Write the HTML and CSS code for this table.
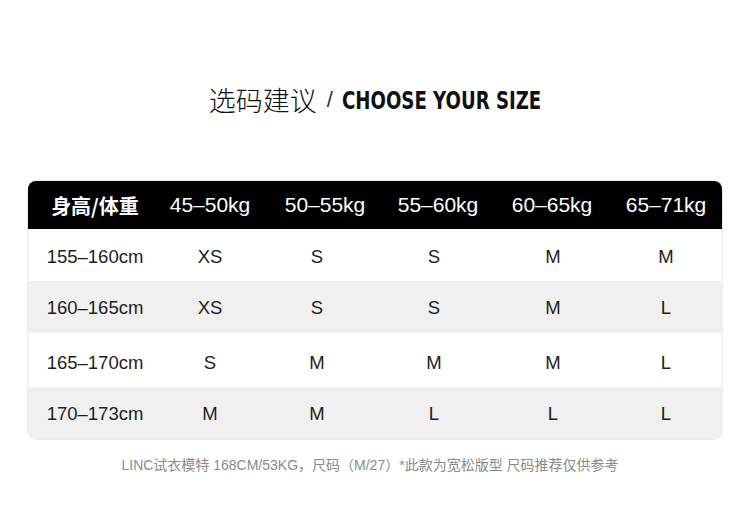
FILE: index.html
```html
<!DOCTYPE html>
<html lang="zh">
<head>
<meta charset="utf-8">
<link rel="stylesheet" href="styles.css">
</head>
<body>
<div class="page">
  <h1 class="title"><span class="cn">选码建议</span><span class="slash">/</span><span class="en">CHOOSE YOUR SIZE</span></h1>
  <div class="table">
    <div class="row head">
      <div class="cell first">身高/体重</div>
      <div class="cell">45–50kg</div>
      <div class="cell">50–55kg</div>
      <div class="cell">55–60kg</div>
      <div class="cell">60–65kg</div>
      <div class="cell">65–71kg</div>
    </div>
    <div class="row">
      <div class="cell first">155–160cm</div>
      <div class="cell">XS</div><div class="cell">S</div><div class="cell">S</div><div class="cell">M</div><div class="cell">M</div>
    </div>
    <div class="row alt">
      <div class="cell first">160–165cm</div>
      <div class="cell">XS</div><div class="cell">S</div><div class="cell">S</div><div class="cell">M</div><div class="cell">L</div>
    </div>
    <div class="row tall">
      <div class="cell first">165–170cm</div>
      <div class="cell">S</div><div class="cell">M</div><div class="cell">M</div><div class="cell">M</div><div class="cell">L</div>
    </div>
    <div class="row alt">
      <div class="cell first">170–173cm</div>
      <div class="cell">M</div><div class="cell">M</div><div class="cell">L</div><div class="cell">L</div><div class="cell">L</div>
    </div>
  </div>
  <p class="note">LINC试衣模特 168CM/53KG，尺码（M/27）*此款为宽松版型 尺码推荐仅供参考</p>
</div>
</body>
</html>
```
FILE: styles.css
```css
html, body {
  margin: 0;
  padding: 0;
  background: #fff;
}
body {
  font-family: "Liberation Sans", "Noto Sans CJK SC", sans-serif;
  color: #1a1a1a;
}
.page {
  width: 750px;
  height: 512px;
  display: flex;
  flex-direction: column;
  align-items: center;
  padding-top: 84px;
  box-sizing: border-box;
}
.title {
  margin: 0;
  height: 32px;
  line-height: 32px;
  display: flex;
  align-items: center;
  font-weight: normal;
  color: #111;
}
.title .cn {
  font-family: "Noto Sans CJK SC", sans-serif;
  font-weight: 300;
  font-size: 27px;
}
.title .slash {
  font-family: "Liberation Sans", sans-serif;
  font-size: 22px;
  color: #333;
  margin: 0 9px 0 10px;
}
.title .en {
  display: inline-block;
  font-family: "DejaVu Sans Condensed", "DejaVu Sans", sans-serif;
  font-weight: bold;
  font-size: 24px;
  color: #111;
  padding-top: 2px;
  transform: scaleX(0.84);
  transform-origin: left center;
  margin-right: -38px;
}
.table {
  margin-top: 65px;
  width: 694px;
  border-radius: 8px;
  overflow: hidden;
  box-shadow: 0 0 0 1px #ececec;
}
.row {
  display: grid;
  grid-template-columns: 134px 96px 118px 116px 122px 104px;
  height: 52px;
  padding-top: 3px;
  box-sizing: border-box;
  align-items: center;
  background: #fff;
  font-size: 18.5px;
  color: #1e1e1e;
}
.row.tall {
  height: 54px;
  padding-top: 6px;
}
.row.alt {
  background: #f0f0f0;
  padding-top: 2px;
}
.row.head {
  height: 48px;
  padding-top: 0;
  background: #000;
  color: #fff;
  font-size: 21px;
  grid-template-columns: 134px 96px 134px 92px 136px 92px;
}
.cell {
  text-align: center;
}
.row.head .first {
  font-family: "Noto Sans CJK SC", sans-serif;
  font-weight: bold;
  font-size: 20px;
}
.note {
  margin: 16px 10px 0 0;
  line-height: 20px;
  font-size: 14px;
  color: #8a8a8a;
}
```
